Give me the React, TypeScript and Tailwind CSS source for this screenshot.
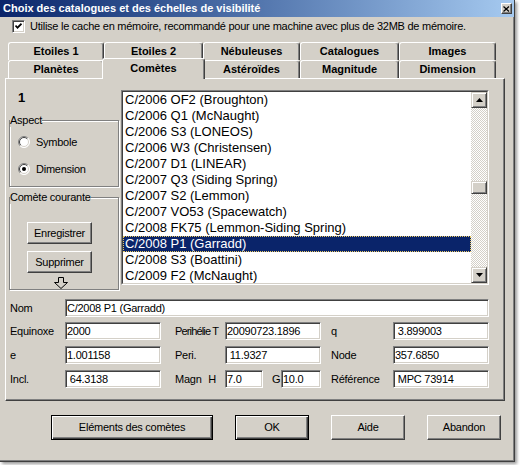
import React from "react";

const COMETS = [
  "C/2006 OF2 (Broughton)",
  "C/2006 Q1 (McNaught)",
  "C/2006 S3 (LONEOS)",
  "C/2006 W3 (Christensen)",
  "C/2007 D1 (LINEAR)",
  "C/2007 Q3 (Siding Spring)",
  "C/2007 S2 (Lemmon)",
  "C/2007 VO53 (Spacewatch)",
  "C/2008 FK75 (Lemmon-Siding Spring)",
  "C/2008 P1 (Garradd)",
  "C/2008 S3 (Boattini)",
  "C/2009 F2 (McNaught)",
];
const SELECTED = 9;

const ROW1 = [
  { label: "Etoiles 1", w: "w-[96px]" },
  { label: "Etoiles 2", w: "w-[99px]" },
  { label: "Nébuleuses", w: "w-[97px]" },
  { label: "Catalogues", w: "w-[99px]" },
  { label: "Images", w: "w-[97px]" },
];
const ROW2 = [
  { label: "Planètes", w: "w-[96px]" },
  { label: "Comètes", w: "w-[103px]", active: true },
  { label: "Astéroïdes", w: "w-[97px]" },
  { label: "Magnitude", w: "w-[99px]" },
  { label: "Dimension", w: "w-[97px]" },
];

const raised =
  "border border-t-white border-l-white border-r-[#404040] border-b-[#404040] shadow-[inset_-1px_-1px_0_#808080]";
const defaultBtn =
  "border border-black shadow-[inset_1px_1px_0_white,inset_-1px_-1px_0_#404040,inset_-2px_-2px_0_#808080]";
const sunken =
  "bg-white border border-t-[#808080] border-l-[#808080] border-b-white border-r-white shadow-[inset_1px_1px_0_#404040,inset_-1px_-1px_0_#d4d0c8]";
const scrollBtn =
  "border border-t-[#d4d0c8] border-l-[#d4d0c8] border-r-[#404040] border-b-[#404040] shadow-[inset_1px_1px_0_white,inset_-1px_-1px_0_#808080] bg-[#d4d0c8]";

function Tab({ label, w, active }: { label: string; w: string; active?: boolean }) {
  if (active) {
    return (
      <div
        className={`${w} -mx-[2px] -mt-[2px] -mb-[1px] h-[21px] relative z-10 bg-[#d4d0c8] flex items-center justify-center pb-[2px] font-bold border-t border-l border-white border-r border-r-[#404040] rounded-t-[3px] shadow-[inset_-1px_0_0_#808080]`}
      >
        {label}
      </div>
    );
  }
  return (
    <div
      className={`${w} h-[18px] flex items-center justify-center font-bold border-t border-l border-white border-r border-r-[#404040] rounded-t-[3px] shadow-[inset_-1px_0_0_#808080]`}
    >
      {label}
    </div>
  );
}

function Radio({ checked }: { checked?: boolean }) {
  return (
    <svg width="12" height="12" viewBox="0 0 12 12">
      <circle cx="6" cy="6" r="5.5" fill="white" />
      <path d="M2.1 9.9 A5.5 5.5 0 0 1 9.9 2.1" fill="none" stroke="#808080" />
      <path d="M9.9 2.1 A5.5 5.5 0 0 1 2.1 9.9" fill="none" stroke="#ffffff" />
      <path d="M2.8 9.2 A4.5 4.5 0 0 1 9.2 2.8" fill="none" stroke="#404040" />
      <path d="M9.2 2.8 A4.5 4.5 0 0 1 2.8 9.2" fill="none" stroke="#d4d0c8" />
      {checked && <circle cx="6" cy="6" r="2" fill="black" />}
    </svg>
  );
}

function Field({ w, text }: { w: string; text: string }) {
  return <div className={`${w} h-[18px] ${sunken} pl-[1px] leading-[16px] whitespace-pre`}>{text}</div>;
}

export default function App() {
  return (
    <div className="w-[520px] h-[465px] bg-white font-['Liberation_Sans',Arial,sans-serif] text-[11px] tracking-[-0.25px] text-black whitespace-nowrap">
      <div className="w-[515px] h-[462px] bg-[#d4d0c8] border-r border-b border-[#404040] shadow-[inset_-1px_-1px_0_#808080,2px_2px_3px_rgba(0,0,0,0.4)] flex flex-col">
        {/* title bar */}
        <div className="h-[17px] flex items-center pl-[3px] pr-[2px] bg-linear-to-r from-[#0a246a] to-[#a6caf0] text-white font-bold tracking-normal">
          <span>Choix des catalogues et des échelles de visibilité</span>
          <div className={`ml-auto w-[11px] h-[11px] ${raised} bg-[#d4d0c8] flex items-center justify-center`}>
            <svg width="7" height="6" viewBox="0 0 7 6">
              <path d="M0.5 0.5 L6 5.5 M6 0.5 L0.5 5.5" stroke="black" strokeWidth="1.2" />
            </svg>
          </div>
        </div>

        {/* cache checkbox */}
        <div className="mt-[3px] h-[13px] flex items-center pl-[12px]">
          <div className={`w-[13px] h-[13px] ${sunken} flex items-center justify-center`}>
            <svg width="7" height="7" viewBox="0 0 7 7">
              <path d="M0.5 2.5 L2.5 4.7 L6.5 0.7" fill="none" stroke="black" strokeWidth="1.7" />
            </svg>
          </div>
          <span className="ml-[5px]">
            Utilise le cache en mémoire, recommandé pour une machine avec plus de 32MB de mémoire.
          </span>
        </div>

        {/* tabs */}
        <div className="mt-[9px] pl-[8px] flex tracking-normal">
          {ROW1.map((t) => (
            <Tab key={t.label} {...t} />
          ))}
        </div>
        <div className="pl-[8px] flex tracking-normal">
          {ROW2.map((t) => (
            <Tab key={t.label} {...t} />
          ))}
        </div>

        {/* panel */}
        <div className="ml-[5px] w-[500px] h-[323px] border-t border-l border-white border-r border-b border-r-[#404040] border-b-[#404040] shadow-[inset_-1px_-1px_0_#808080] pt-[11px] pl-[3px]">
          <div className="flex">
            <div className="w-[110px]">
              <div className="h-[16px] pl-[9px] text-[13px] font-bold leading-[16px]">1</div>

              <fieldset className="mt-[8px] w-full h-[73px] border border-[#808080] shadow-[inset_1px_1px_0_white,1px_1px_0_white]">
                <legend className="bg-[#d4d0c8] leading-[13px]">Aspect</legend>
                <div className="mt-[7px] h-[16px] flex items-center pl-[8px]">
                  <Radio />
                  <span className="ml-[6px]">Symbole</span>
                </div>
                <div className="mt-[11px] h-[16px] flex items-center pl-[8px]">
                  <Radio checked />
                  <span className="ml-[6px]">Dimension</span>
                </div>
              </fieldset>

              <fieldset className="mt-[4px] w-full h-[99px] border border-[#808080] shadow-[inset_1px_1px_0_white,1px_1px_0_white]">
                <legend className="bg-[#d4d0c8] leading-[13px]">Comète courante</legend>
                <div className={`mt-[18px] ml-[17px] w-[65px] h-[22px] ${raised} flex items-center justify-center`}>
                  Enregistrer
                </div>
                <div className={`mt-[7px] ml-[17px] w-[65px] h-[22px] ${raised} flex items-center justify-center`}>
                  Supprimer
                </div>
                <div className="mt-[4px] ml-[43px]">
                  <svg width="16" height="12" viewBox="0 0 16 12">
                    <path d="M5.5 0.5 H10.5 V5.5 H14.5 L8 11.5 L1.5 5.5 H5.5 Z" fill="none" stroke="black" />
                  </svg>
                </div>
              </fieldset>
            </div>

            {/* comet list */}
            <div className="ml-[2px] w-[368px] h-[195px] border border-t-[#808080] border-l-[#808080] border-b-white border-r-white tracking-normal">
              <div className="w-full h-full border border-t-[#404040] border-l-[#404040] border-b-[#d4d0c8] border-r-[#d4d0c8] flex bg-white">
                <div className="flex-1 overflow-hidden text-[13px]">
                  {COMETS.map((c, i) => (
                    <div
                      key={c}
                      className={
                        i === SELECTED
                          ? "h-[16px] leading-[16px] pl-[2px] bg-[#0a246a] text-white outline-1 outline-dotted outline-[#e8c860] -outline-offset-1"
                          : "h-[16px] leading-[16px] pl-[2px]"
                      }
                    >
                      {c}
                    </div>
                  ))}
                </div>
                <div className="w-[16px] flex flex-col">
                  <div className={`h-[16px] ${scrollBtn} flex items-center justify-center`}>
                    <svg width="7" height="4" viewBox="0 0 7 4">
                      <path d="M3.5 0 L7 4 H0 Z" fill="black" />
                    </svg>
                  </div>
                  <div className="flex-1 bg-[repeating-conic-gradient(#d4d0c8_0%_25%,#ffffff_0%_50%)] bg-[length:2px_2px]">
                    <div className={`mt-[73px] h-[13px] ${scrollBtn}`} />
                  </div>
                  <div className={`h-[16px] ${scrollBtn} flex items-center justify-center`}>
                    <svg width="7" height="4" viewBox="0 0 7 4">
                      <path d="M0 0 H7 L3.5 4 Z" fill="black" />
                    </svg>
                  </div>
                </div>
              </div>
            </div>
          </div>

          {/* comet elements */}
          <div className="mt-[9px] pl-[1px] flex flex-col">
            <div className="h-[18px] flex items-center">
              <span className="w-[55px]">Nom</span>
              <Field w="w-[424px]" text="C/2008 P1 (Garradd)" />
            </div>
            <div className="mt-[5px] h-[18px] flex items-center">
              <span className="w-[55px]">Equinoxe</span>
              <Field w="w-[96px]" text="2000" />
              <span className="ml-[14px] w-[50px] tracking-[-0.85px]">Perihélie T</span>
              <Field w="w-[96px]" text="20090723.1896" />
              <span className="ml-[10px] w-[62px]">q</span>
              <Field w="w-[96px]" text=" 3.899003" />
            </div>
            <div className="mt-[6px] h-[18px] flex items-center">
              <span className="w-[55px]">e</span>
              <Field w="w-[96px]" text="1.001158" />
              <span className="ml-[14px] w-[50px]">Peri.</span>
              <Field w="w-[96px]" text=" 11.9327" />
              <span className="ml-[10px] w-[62px]">Node</span>
              <Field w="w-[96px]" text="357.6850" />
            </div>
            <div className="mt-[6px] h-[18px] flex items-center">
              <span className="w-[55px]">Incl.</span>
              <Field w="w-[96px]" text=" 64.3138" />
              <span className="ml-[14px] w-[50px] flex pr-[9px]">
                <span>Magn</span>
                <span className="ml-auto">H</span>
              </span>
              <Field w="w-[38px]" text="7.0" />
              <span className="ml-[9px] w-[9px]">G</span>
              <Field w="w-[40px]" text="10.0" />
              <span className="ml-[10px] w-[62px]">Référence</span>
              <Field w="w-[96px]" text=" MPC 73914" />
            </div>
          </div>
        </div>

        {/* dialog buttons */}
        <div className="mt-[14px] pl-[51px] flex">
          <div className={`w-[162px] h-[25px] ${defaultBtn} flex items-center justify-center`}>Eléments des comètes</div>
          <div className={`ml-[22px] w-[74px] h-[25px] ${defaultBtn} flex items-center justify-center`}>OK</div>
          <div className={`ml-[22px] w-[74px] h-[25px] ${raised} flex items-center justify-center`}>Aide</div>
          <div className={`ml-[22px] w-[74px] h-[25px] ${raised} flex items-center justify-center`}>Abandon</div>
        </div>
      </div>
    </div>
  );
}
